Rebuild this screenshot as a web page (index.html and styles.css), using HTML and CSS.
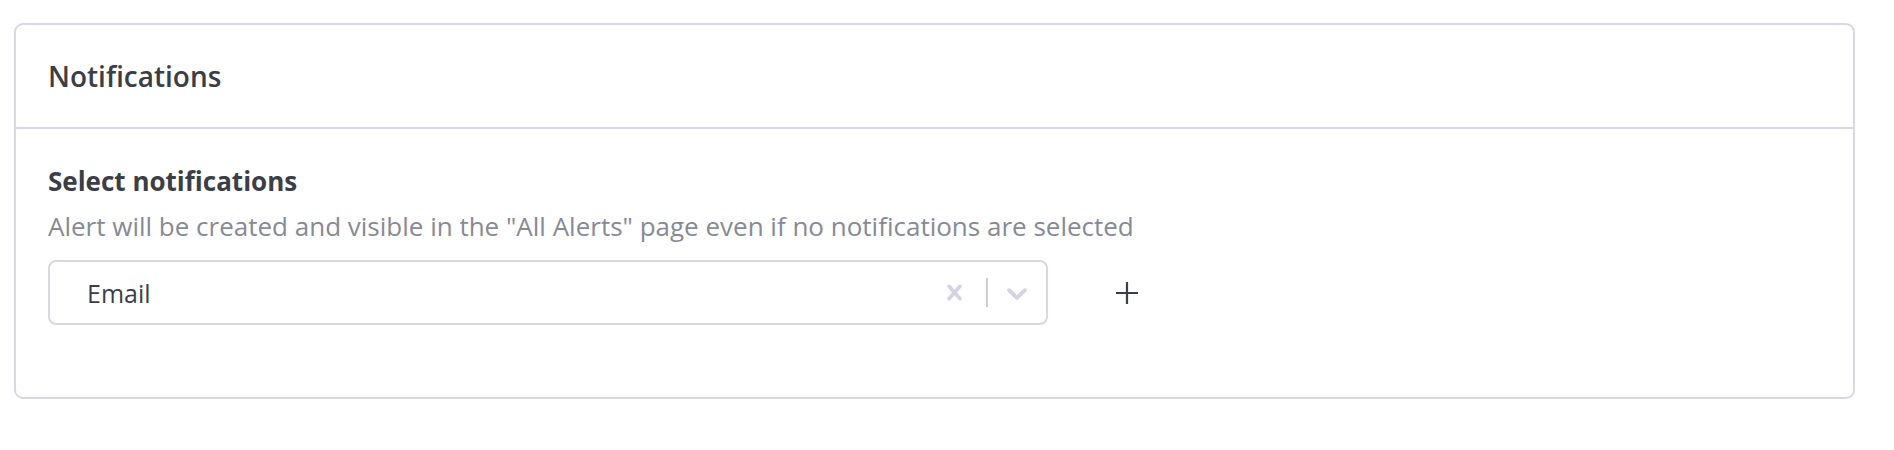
FILE: index.html
```html
<!DOCTYPE html>
<html lang="en">
<head>
<meta charset="utf-8">
<title>Notifications</title>
<link rel="stylesheet" href="styles.css">
</head>
<body>
<section class="card">
  <header class="card-header">
    <h2 class="card-title">Notifications</h2>
  </header>
  <div class="card-body">
    <h3 class="field-label">Select notifications</h3>
    <p class="field-help">Alert will be created and visible in the "All Alerts" page even if no notifications are selected</p>
    <div class="field-row">
      <div class="select">
        <div class="select-value">Email</div>
        <div class="select-indicators">
          <svg class="icon-clear" width="31" height="31" viewBox="0 0 20 20" aria-hidden="true">
            <path fill="currentColor" d="M14.348 14.849c-0.469 0.469-1.229 0.469-1.697 0l-2.651-3.030-2.651 3.029c-0.469 0.469-1.229 0.469-1.697 0-0.469-0.469-0.469-1.229 0-1.697l2.758-3.15-2.759-3.152c-0.469-0.469-0.469-1.228 0-1.697s1.228-0.469 1.697 0l2.652 3.031 2.651-3.031c0.469-0.469 1.228-0.469 1.697 0s0.469 1.229 0 1.697l-2.758 3.152 2.758 3.15c0.469 0.469 0.469 1.229 0 1.698z"/>
          </svg>
          <span class="select-sep"></span>
          <svg class="icon-chevron" width="34" height="34" viewBox="0 0 20 20" aria-hidden="true">
            <path fill="currentColor" d="M4.516 7.548c0.436-0.446 1.043-0.481 1.576 0l3.908 3.747 3.908-3.747c0.533-0.481 1.141-0.446 1.574 0 0.436 0.445 0.408 1.197 0 1.615-0.406 0.418-4.695 4.502-4.695 4.502-0.217 0.223-0.502 0.335-0.787 0.335s-0.57-0.112-0.789-0.335c0 0-4.287-4.084-4.695-4.502s-0.436-1.170 0-1.615z"/>
          </svg>
        </div>
      </div>
      <button class="add-btn" type="button" aria-label="Add">
        <svg width="22" height="22" viewBox="0 0 22 22" aria-hidden="true">
          <path d="M11 0 V22 M0 11 H22" stroke="currentColor" stroke-width="2.2" fill="none"/>
        </svg>
      </button>
    </div>
  </div>
</section>
</body>
</html>
```

FILE: styles.css
```css
html, body {
  margin: 0;
  padding: 0;
  background: #ffffff;
}

body {
  font-family: "Open Sans", "Liberation Sans", sans-serif;
  color: #3b3e46;
  padding: 23px 39px 0 14px;
}

.card {
  border: 2px solid #d9d7e6;
  border-radius: 9px;
  background: #ffffff;
}

.card-header {
  height: 102px;
  display: flex;
  align-items: center;
  padding: 0 32px;
  border-bottom: 2px solid #d9d7e6;
}

.card-title {
  margin: 0;
  font-size: 28px;
  font-weight: 600;
  color: #3b3e46;
}

.card-body {
  padding: 34px 32px 72px;
}

.field-label {
  margin: 0;
  font-size: 26px;
  font-weight: 700;
  line-height: 36px;
  color: #3b3e46;
}

.field-help {
  margin: 9px 0 0;
  font-size: 26px;
  line-height: 36px;
  color: #868a94;
}

.field-row {
  display: flex;
  align-items: center;
  margin-top: 16px;
}

.select {
  width: 1000px;
  height: 65px;
  box-sizing: border-box;
  border: 2px solid #d9d7e6;
  border-radius: 8px;
  display: flex;
  align-items: center;
}

.select-value {
  flex: 1;
  padding-left: 37px;
  font-size: 25px;
  color: #3b3e46;
}

.select-indicators {
  display: flex;
  align-items: center;
  padding-right: 12px;
}

.icon-clear {
  color: #d4d2e3;
  display: block;
}

.select-sep {
  width: 2px;
  height: 29px;
  background: #cfcfd3;
  margin: 0 12px 0 16px;
}

.icon-chevron {
  color: #d4d2e3;
  display: block;
}

.add-btn {
  margin-left: 55px;
  width: 48px;
  height: 48px;
  border: 0;
  background: transparent;
  color: #3b3e46;
  padding: 0;
  display: flex;
  align-items: center;
  justify-content: center;
}
```
